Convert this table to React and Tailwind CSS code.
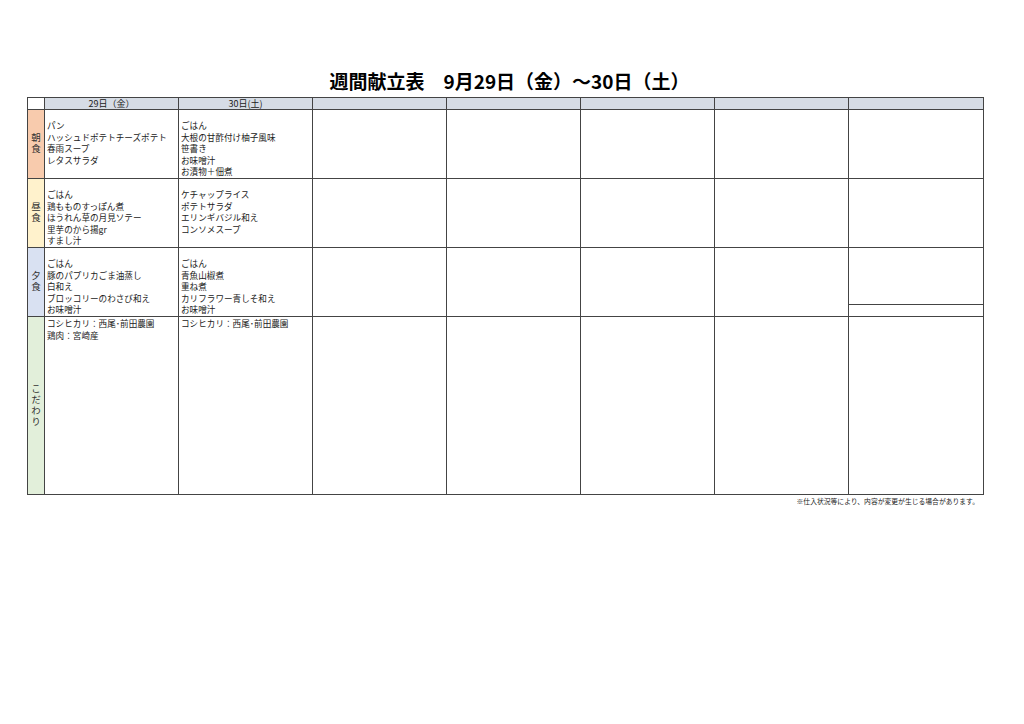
const font = { fontFamily: '"Noto Sans CJK JP", "Noto Sans", sans-serif' };

const meals = [
  {
    label: '朝食',
    bg: 'bg-[#f8cbad]',
    days: [
      ['パン', 'ハッシュドポテトチーズポテト', '春雨スープ', 'レタスサラダ'],
      ['ごはん', '大根の甘酢付け柚子風味', '笹書き', 'お味噌汁', 'お漬物＋佃煮'],
    ],
  },
  {
    label: '昼食',
    bg: 'bg-[#fff2cc]',
    days: [
      ['ごはん', '鶏もものすっぽん煮', 'ほうれん草の月見ソテー', '里芋のから揚gr', 'すまし汁'],
      ['ケチャップライス', 'ポテトサラダ', 'エリンギバジル和え', 'コンソメスープ'],
    ],
  },
  {
    label: '夕食',
    bg: 'bg-[#d9e1f2]',
    days: [
      ['ごはん', '豚のパプリカごま油蒸し', '白和え', 'ブロッコリーのわさび和え', 'お味噌汁'],
      ['ごはん', '青魚山椒煮', '重ね煮', 'カリフラワー青しそ和え', 'お味噌汁'],
    ],
  },
];

const kodawari = [
  ['コシヒカリ：西尾･前田農園', '鶏肉：宮崎産'],
  ['コシヒカリ：西尾･前田農園'],
];

const cols = [0, 1, 2, 3, 4, 5, 6];

function Lines({ items }) {
  return (
    <div className="flex flex-col">
      {(items || []).map((t, i) => (
        <span key={i} className="leading-[11.5px] whitespace-nowrap">{t}</span>
      ))}
    </div>
  );
}

// vertical label, one text node per cell
function Label({ text }) {
  return (
    <div className="flex justify-center">
      <span className="[writing-mode:vertical-rl] text-[9.5px] leading-[12px] tracking-[1.5px] text-[#333]">
        {text}
      </span>
    </div>
  );
}

export default function App() {
  return (
    <div className="w-[1024px] h-[724px] bg-white text-[#222]" style={font}>
      <div className="ml-[27px] w-[956px] pt-[67px]">
        <h1 className="text-center font-bold text-[19px] leading-[28px] text-black pl-[9px]">
          週間献立表　9月29日（金）～30日（土）
        </h1>
        <table className="table-fixed border-collapse w-[956px] mt-[2px]">
          <colgroup>
            <col className="w-[17px]" />
            {cols.map((c) => (
              <col key={c} className={c === 6 ? 'w-[135px]' : 'w-[134px]'} />
            ))}
          </colgroup>
          <thead>
            <tr className="h-[12px]">
              <th className="border border-[#444] bg-white p-0"></th>
              {cols.map((c) => (
                <th
                  key={c}
                  className="border border-[#444] bg-[#d6dce5] p-0 font-normal text-[9px] leading-[10px] text-center"
                >
                  {c === 0 ? '29日（金）' : c === 1 ? '30日(土)' : ''}
                </th>
              ))}
            </tr>
          </thead>
          <tbody>
            {meals.map((m, mi) => (
              <tr key={mi} className="h-[69px]">
                <td className={`border border-[#444] p-0 ${m.bg}`}>
                  <Label text={m.label} />
                </td>
                {cols.map((c) =>
                  mi === 2 && c === 6 ? (
                    <td key={c} className="border border-[#444] p-0 align-top">
                      <div className="flex flex-col h-[65px]">
                        <div className="flex-1 border-b border-[#444]"></div>
                        <div className="h-[8px]"></div>
                      </div>
                    </td>
                  ) : (
                    <td key={c} className="border border-[#444] p-0 align-top text-[8.6px] pl-[2px] pt-[10px]">
                      <Lines items={m.days[c]} />
                    </td>
                  )
                )}
              </tr>
            ))}
            <tr className="h-[178px]">
              <td className="border border-[#444] p-0 bg-[#e2efda]">
                <Label text="こだわり" />
              </td>
              {cols.map((c) => (
                <td key={c} className="border border-[#444] p-0 align-top text-[8.6px] pl-[2px] pt-[1px]">
                  <Lines items={kodawari[c]} />
                </td>
              ))}
            </tr>
          </tbody>
        </table>
        <p className="text-right text-[6.8px] leading-[10px] pr-[4px] mt-[1px]">
          ※仕入状況等により、内容が変更が生じる場合があります。
        </p>
      </div>
    </div>
  );
}
